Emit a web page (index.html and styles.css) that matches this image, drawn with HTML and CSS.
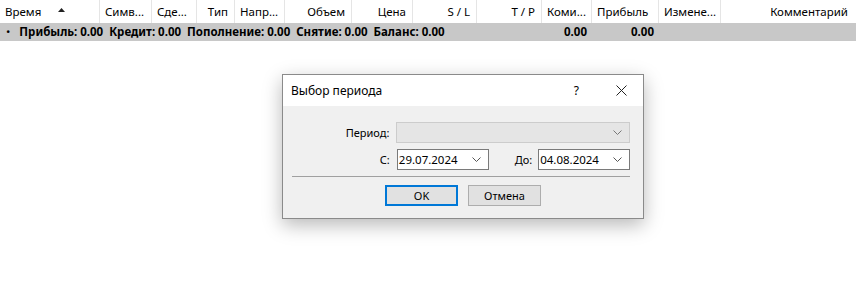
FILE: index.html
```html
<!DOCTYPE html>
<html lang="ru">
<head>
    <meta charset="UTF-8">
    <title>История</title>
    <link rel="stylesheet" href="styles.css">
</head>
<body>
    <div class="grid">
        <div class="row head">
            <div class="cell">Время
                <svg class="sort" width="7" height="4" viewBox="0 0 7 4"><path d="M0 4 L3.5 0 L7 4 Z" fill="#222"/></svg>
            </div>
            <div class="cell">Симв...</div>
            <div class="cell">Сде...</div>
            <div class="cell right">Тип</div>
            <div class="cell">Напр...</div>
            <div class="cell right">Объем</div>
            <div class="cell right">Цена</div>
            <div class="cell right">S / L</div>
            <div class="cell right">T / P</div>
            <div class="cell">Коми...</div>
            <div class="cell">Прибыль</div>
            <div class="cell">Измене...</div>
            <div class="cell right">Комментарий</div>
        </div>
        <div class="row total">
            <div class="cell wide"><span class="dot">•</span> Прибыль: 0.00&nbsp; Кредит: 0.00&nbsp; Пополнение: 0.00&nbsp; Снятие: 0.00&nbsp; Баланс: 0.00</div>
            <div class="cell right">0.00</div>
            <div class="cell right">0.00</div>
            <div class="cell"></div>
            <div class="cell"></div>
        </div>
    </div>

    <div class="dialog">
        <div class="titlebar">
            <span class="title">Выбор периода</span>
            <span class="help">?</span>
            <svg class="close" width="11" height="11" viewBox="0 0 11 11"><path d="M0.5 0.5 L10.5 10.5 M10.5 0.5 L0.5 10.5" stroke="#222" stroke-width="1"/></svg>
        </div>
        <div class="body">
            <div class="form-row">
                <label class="lbl">Период:</label>
                <div class="combo disabled">
                    <svg class="chev" width="9" height="5" viewBox="0 0 9 5"><path d="M0.5 0.5 L4.5 4.5 L8.5 0.5" fill="none" stroke="#777"/></svg>
                </div>
            </div>
            <div class="form-row">
                <label class="lbl">С:</label>
                <div class="combo date">29.07.2024
                    <svg class="chev" width="9" height="5" viewBox="0 0 9 5"><path d="M0.5 0.5 L4.5 4.5 L8.5 0.5" fill="none" stroke="#555"/></svg>
                </div>
                <label class="lbl to">До:</label>
                <div class="combo date">04.08.2024
                    <svg class="chev" width="9" height="5" viewBox="0 0 9 5"><path d="M0.5 0.5 L4.5 4.5 L8.5 0.5" fill="none" stroke="#555"/></svg>
                </div>
            </div>
            <div class="sep"></div>
            <div class="buttons">
                <button class="btn default">OK</button>
                <button class="btn">Отмена</button>
            </div>
        </div>
    </div>
</body>
</html>
```

FILE: styles.css
```css
body {
    margin: 0;
    width: 856px;
    height: 302px;
    background: #fff;
    font-family: "Noto Sans", "Open Sans", sans-serif;
    font-size: 11px;
    color: #000;
    position: relative;
    overflow: hidden;
}
.row {
    display: grid;
    grid-template-columns: 100px 52px 45px 38px 50px 67px 61px 64px 65px 50px 67px 62px 135px;
}
.head {
    height: 23px;
    font-size: 11.5px;
}
.head .cell {
    border-right: 1px solid #e5e5e5;
    line-height: 23px;
    padding: 0 5px;
    white-space: nowrap;
    overflow: hidden;
    position: relative;
}
.head .cell.right {
    text-align: right;
    padding-right: 6px;
}
.head .cell:last-child {
    padding-right: 8px;
    border-right: none;
}
.sort {
    position: absolute;
    left: 58px;
    top: 8px;
}
.total {
    background: #c8c8c8;
    height: 18px;
    font-weight: bold;
    font-size: 11.5px;
}
.total .cell {
    line-height: 18px;
    padding: 0 5px;
    white-space: nowrap;
}
.total .cell.right {
    text-align: right;
    padding-right: 5px;
}
.total .wide {
    grid-column: span 9;
    padding-left: 6px;
}
.dot {
    font-weight: normal;
    margin-right: 6px;
}
.dialog {
    position: absolute;
    left: 282px;
    top: 74px;
    width: 360px;
    height: 143px;
    border: 1px solid #8a8a8a;
    background: #f0f0f0;
    box-shadow: 0 6px 18px rgba(0, 0, 0, 0.28);
}
.titlebar {
    height: 31px;
    background: #fff;
    display: flex;
    align-items: center;
    padding-left: 8px;
    font-size: 12px;
}
.title {
    flex: 1;
}
.help {
    margin-right: 37px;
}
.close {
    margin-right: 16px;
}
.body {
    padding: 16px 13px 0 8px;
}
.form-row {
    display: flex;
    align-items: center;
    height: 21px;
    margin-bottom: 6px;
}
.lbl {
    width: 99px;
    text-align: right;
    padding-right: 7px;
}
.lbl.to {
    width: auto;
    margin-left: 26px;
    padding-right: 6px;
}
.combo {
    height: 19px;
    border: 1px solid #7a7a7a;
    background: #fff;
    display: flex;
    align-items: center;
    padding-left: 1px;
    box-sizing: content-box;
}
.combo.disabled {
    width: 232px;
    background: #e5e5e5;
    border-color: #cccccc;
}
.combo.date {
    width: 89px;
    font-size: 11.5px;
}
.chev {
    margin-left: auto;
    margin-right: 7px;
}
.sep {
    height: 1px;
    background: #a0a0a0;
    margin: 5px 0 8px 1px;
}
.buttons {
    display: flex;
    justify-content: center;
    gap: 10px;
    padding-left: 5px;
}
.btn {
    width: 73px;
    height: 21px;
    border: 1px solid #adadad;
    background: #e1e1e1;
    font-family: inherit;
    font-size: 11px;
    padding: 0;
}
.btn.default {
    border: 2px solid #0078d7;
}
```
